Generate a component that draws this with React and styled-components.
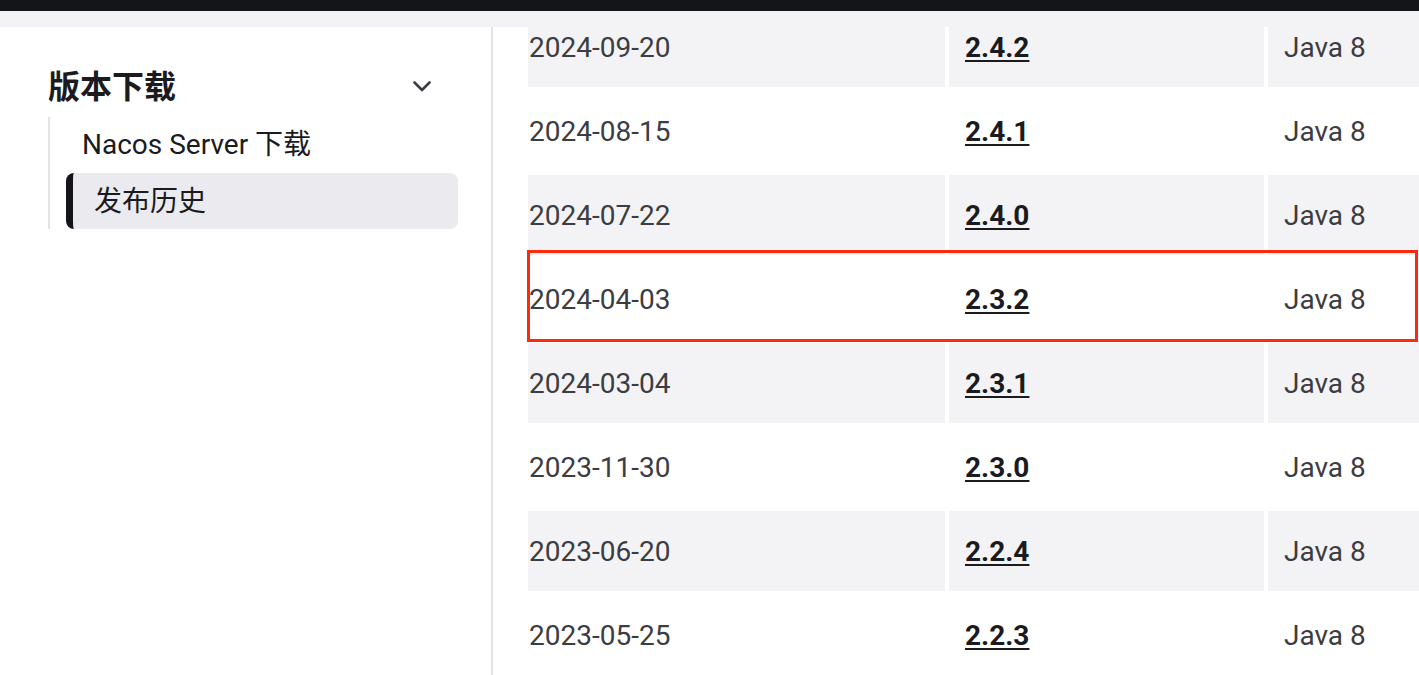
import React from "react";
import styled, { createGlobalStyle } from "styled-components";

const GlobalStyle = createGlobalStyle`
  html, body { margin: 0; padding: 0; background: #ffffff; }
  body { font-family: Roboto, "Noto Sans CJK SC", sans-serif; overflow: hidden; }
  *, *::before, *::after { box-sizing: border-box; }
`;

const Page = styled.div`
  display: flex;
  flex-direction: column;
  height: 100vh;
`;

const TopBar = styled.div`
  height: 11px;
  background: #141519;
  flex: none;
`;

const Band = styled.div`
  height: 16px;
  background: #f3f3f5;
  flex: none;
`;

const Main = styled.div`
  flex: 1;
  min-height: 0;
  display: grid;
  grid-template-columns: 493px minmax(0, 1fr);
`;

const Sidebar = styled.aside`
  border-right: 2px solid #e2e2e6;
  padding: 37px 33px 0 48px;
  font-family: Roboto, "Noto Sans CJK SC", sans-serif;
`;

const GroupHeader = styled.div`
  display: flex;
  align-items: center;
  justify-content: space-between;
  height: 40px;
`;

const GroupTitle = styled.h2`
  margin: 0;
  font-size: 32px;
  font-weight: 700;
  line-height: 40px;
  color: #1b1b1f;
  font-family: "Noto Sans CJK SC", sans-serif;
`;

const Chevron = styled.svg`
  width: 18px;
  height: 11px;
  margin-right: 27px;
  margin-top: 4px;
`;

const NavList = styled.ul`
  list-style: none;
  margin: 13px 0 0 0;
  padding: 0 0 0 16px;
  border-left: 2px solid #e4e4e8;
`;

const NavItem = styled.li`
  height: 56px;
  display: flex;
  align-items: center;
  font-size: 28px;
  line-height: 1;
  color: #1b1b1f;
  padding-left: ${(p) => (p.$active ? "21px" : "16px")};
  padding-top: ${(p) => (p.$active ? "1px" : "0")};
  background: ${(p) => (p.$active ? "#ebebef" : "transparent")};
  border-left: ${(p) => (p.$active ? "7px solid #141519" : "none")};
  border-radius: 8px;
`;

const Content = styled.section`
  overflow: hidden;
  padding-left: 35px;
  min-width: 0;
`;

const Rows = styled.div`
  display: flex;
  flex-direction: column;
  gap: 4px;
  margin-top: -20px;
  width: 1140px;
`;

const Row = styled.div`
  display: grid;
  grid-template-columns: 417px 315px 400px;
  gap: 4px;
  position: relative;
  z-index: ${(p) => (p.$marked ? 2 : "auto")};

  ${(p) =>
    p.$marked &&
    `
    &::after {
      content: "";
      position: absolute;
      z-index: 3;
      left: -1px;
      top: -9px;
      width: 891px;
      height: 92px;
      border: 3px solid #ff2a0c;
      pointer-events: none;
    }
  `}
`;

const Cell = styled.div`
  height: 80px;
  display: flex;
  align-items: center;
  padding-left: ${(p) => (p.$first ? "1px" : "16px")};
  background: ${(p) => (p.$striped ? "#f3f3f5" : "#ffffff")};
  font-family: Roboto, "Liberation Sans", sans-serif;
  font-size: 28px;
  color: #3c3c43;
`;

const VersionLink = styled.a`
  color: #1b1b1f;
  font-weight: 700;
  text-decoration: underline;
  text-decoration-thickness: 2px;
  text-underline-offset: 3px;
`;

const releases = [
  ["2024-09-20", "2.4.2", "Java 8"],
  ["2024-08-15", "2.4.1", "Java 8"],
  ["2024-07-22", "2.4.0", "Java 8"],
  ["2024-04-03", "2.3.2", "Java 8"],
  ["2024-03-04", "2.3.1", "Java 8"],
  ["2023-11-30", "2.3.0", "Java 8"],
  ["2023-06-20", "2.2.4", "Java 8"],
  ["2023-05-25", "2.2.3", "Java 8"],
];

export default function App() {
  return (
    <Page>
      <GlobalStyle />
      <TopBar />
      <Band />
      <Main>
        <Sidebar>
          <GroupHeader>
            <GroupTitle>版本下载</GroupTitle>
            <Chevron viewBox="0 0 18 11" fill="none">
              <path
                d="M1.5 1.5 L9 9 L16.5 1.5"
                stroke="#3c3c43"
                strokeWidth="2.6"
                strokeLinecap="round"
                strokeLinejoin="round"
              />
            </Chevron>
          </GroupHeader>
          <NavList>
            <NavItem>Nacos Server 下载</NavItem>
            <NavItem $active>发布历史</NavItem>
          </NavList>
        </Sidebar>
        <Content>
          <Rows>
            {releases.map(([date, version, java], i) => {
              const striped = i % 2 === 0;
              return (
                <Row key={version} $marked={version === "2.3.2"}>
                  <Cell $first $striped={striped}>{date}</Cell>
                  <Cell $striped={striped}>
                    <VersionLink href="#">{version}</VersionLink>
                  </Cell>
                  <Cell $striped={striped}>{java}</Cell>
                </Row>
              );
            })}
          </Rows>
        </Content>
      </Main>
    </Page>
  );
}
